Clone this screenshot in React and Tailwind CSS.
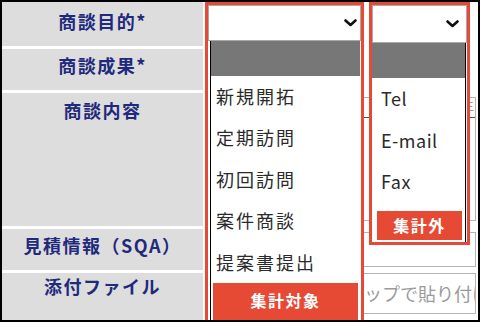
import React from "react";

const jp = { fontFamily: '"Noto Sans CJK JP", "Noto Sans", sans-serif' };

function Chevron() {
  return (
    <svg width="13" height="8" viewBox="0 0 13 8">
      <polyline points="1.5,1.5 6.5,6 11.5,1.5" fill="none" stroke="#111" strokeWidth="2.6" strokeLinecap="round" strokeLinejoin="round" />
    </svg>
  );
}

function Label({ children, pt }) {
  return (
    <div className={`text-center font-bold text-[18px] leading-[24px] tracking-[1.5px] text-[#1f2a7c] ${pt}`}>
      {children}
    </div>
  );
}

export default function App() {
  const items1 = ["新規開拓", "定期訪問", "初回訪問", "案件商談", "提案書提出"];
  const items2 = ["Tel", "E-mail", "Fax"];
  return (
    <div style={jp} className="relative w-[480px] h-[322px] border-2 border-black bg-white overflow-hidden flex">
      {/* label column */}
      <div className="w-[201px] shrink-0 flex flex-col gap-[3px] bg-white">
        <div className="h-[44px] bg-[#dddddd]"><Label pt="pt-[7px]">商談目的*</Label></div>
        <div className="h-[41px] bg-[#dddddd]"><Label pt="pt-[4px]">商談成果*</Label></div>
        <div className="h-[133px] bg-[#dddddd]"><Label pt="pt-[5px]">商談内容</Label></div>
        <div className="h-[41px] bg-[#dddddd]"><Label pt="pt-[4px]">見積情報（SQA）</Label></div>
        <div className="flex-1 bg-[#dddddd]"><Label pt="pt-[1px]">添付ファイル</Label></div>
      </div>

      {/* background form content */}
      <div className="flex-1 min-w-0 flex flex-col gap-[3px] pl-[4px] pr-[2px]">
        <div className="h-[44px]" />
        <div className="h-[41px]" />
        <div className="h-[133px] pt-[4px] pb-[5px]">
          <div className="h-full border border-[#b5b5b5] flex flex-col">
            <div className="h-[20px] border-b border-[#555] flex items-center justify-end pr-[1px] text-[15px] text-[#999]">年</div>
          </div>
        </div>
        <div className="h-[41px] pt-[3px] pb-[3px]">
          <div className="h-full border border-[#b5b5b5]" />
        </div>
        <div className="flex-1 pb-[6px]">
          <div className="h-full border border-[#b5b5b5] flex items-center pl-[30px] whitespace-nowrap overflow-hidden text-[18px] text-[#9a9a9a]">
            ドラッグ＆ドロップで貼り付け
          </div>
        </div>
      </div>

      {/* dropdown 1 */}
      <div className="absolute left-[203px] top-0 w-[159px] bottom-[-6px] border-[3px] border-[#e64a35] bg-white flex flex-col">
        <div className="h-[38px] border border-[#a9a9a9] bg-white flex items-center justify-end pr-[3px]">
          <Chevron />
        </div>
        <div className="flex-1 flex flex-col ml-[2px] mr-[1px] border-l border-black">
          <div className="h-[35px] bg-[#777777]" />
          {items1.map((t) => (
            <div key={t} className="h-[41.5px] flex items-center pl-[5px] text-[18px] tracking-[2px] text-[#2a2a2a]">{t}</div>
          ))}
          <div className="ml-[2px] mr-[2px] h-[40px] bg-[#e64a35] flex justify-center pt-[6px] text-[16px] leading-[22px] font-bold tracking-[1.5px] text-white">集計対象</div>
        </div>
      </div>

      {/* dropdown 2 */}
      <div className="absolute left-[367px] top-0 w-[101px] h-[243px] border-[3px] border-[#e64a35] bg-white flex flex-col">
        <div className="h-[38px] border border-[#a9a9a9] bg-white flex items-center justify-end pr-[7px]">
          <Chevron />
        </div>
        <div className="flex-1 flex flex-col mr-[1px] border-r border-black">
          <div className="h-[35px] bg-[#777777]" />
          {items2.map((t) => (
            <div key={t} className="h-[41.5px] flex items-center pl-[9px] text-[18px] tracking-[0.5px] text-[#2a2a2a]">{t}</div>
          ))}
          <div className="mt-[8px] ml-[5px] mr-[3px] h-[29px] bg-[#e64a35] flex items-center justify-center text-[16px] font-bold tracking-[1.5px] text-white">集計外</div>
        </div>
      </div>
    </div>
  );
}
